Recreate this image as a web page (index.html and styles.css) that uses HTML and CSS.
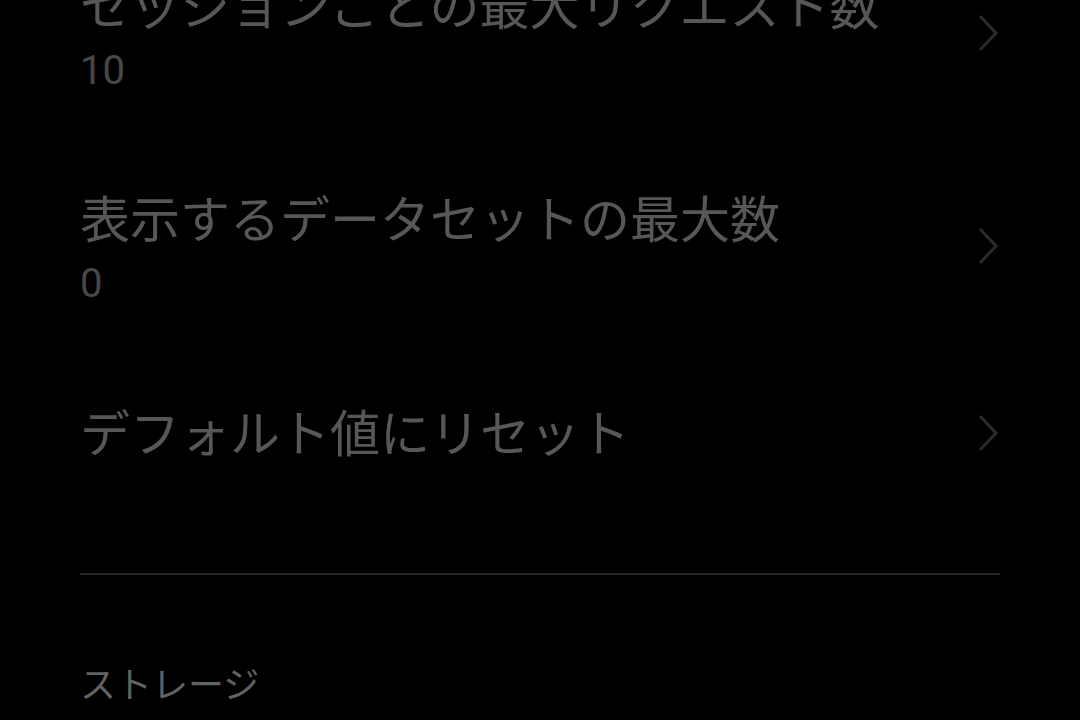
FILE: index.html
```html
<!DOCTYPE html>
<html lang="ja">
<head>
<meta charset="utf-8">
<link rel="stylesheet" href="styles.css">
</head>
<body>
<div class="screen">
  <div class="pref">
    <div class="pref-text">
      <div class="pref-title">セッションごとの最大リクエスト数</div>
      <div class="pref-value">10</div>
    </div>
    <svg class="chev" width="22" height="40" viewBox="0 0 22 40"><path d="M3 3 L19 20 L3 37" fill="none" stroke="#2b2b2b" stroke-width="3"/></svg>
  </div>
  <div class="pref">
    <div class="pref-text">
      <div class="pref-title">表示するデータセットの最大数</div>
      <div class="pref-value">0</div>
    </div>
    <svg class="chev" width="22" height="40" viewBox="0 0 22 40"><path d="M3 3 L19 20 L3 37" fill="none" stroke="#2b2b2b" stroke-width="3"/></svg>
  </div>
  <div class="pref pref-single">
    <div class="pref-text">
      <div class="pref-title">デフォルト値にリセット</div>
    </div>
    <svg class="chev" width="22" height="40" viewBox="0 0 22 40"><path d="M3 3 L19 20 L3 37" fill="none" stroke="#2b2b2b" stroke-width="3"/></svg>
  </div>
  <div class="divider"></div>
  <div class="category">ストレージ</div>
</div>
</body>
</html>
```

FILE: styles.css
```css
html, body {
  margin: 0;
  padding: 0;
  background: #000;
  overflow: hidden;
}
.screen {
  margin-top: -77px;
  font-family: Roboto, "Noto Sans CJK JP", sans-serif;
}
.pref {
  display: flex;
  align-items: center;
  padding: 53px 80px 43px 80px;
}
.pref-single {
  padding-top: 54px;
  padding-bottom: 43px;
}
.pref-text {
  flex: 1;
  min-width: 0;
}
.pref-title {
  font-size: 50px;
  line-height: 64px;
  color: #575757;
  white-space: nowrap;
}
.pref-value {
  margin-top: 9px;
  font-size: 40px;
  line-height: 44px;
  color: #484848;
}
.chev {
  display: block;
  flex: none;
  margin-top: -4px;
  margin-right: 1px;
}
.divider {
  height: 2px;
  background: #262626;
  margin: 63px 80px 0 80px;
}
.category {
  margin-top: 87px;
  padding-left: 80px;
  font-size: 36px;
  line-height: 48px;
  color: #626262;
}
```
